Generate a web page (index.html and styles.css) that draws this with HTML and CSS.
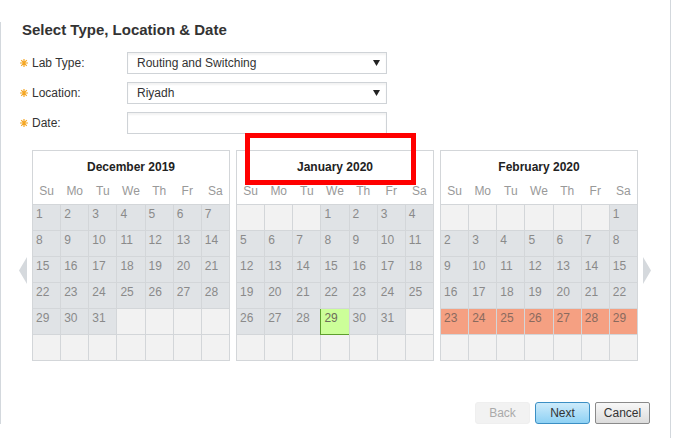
FILE: index.html
```html
<!DOCTYPE html>
<html>
<head>
<meta charset="utf-8">
<link rel="stylesheet" href="styles.css">
</head>
<body>
<div class="wrap">
  <div class="panel">
    <h1 class="title">Select Type, Location &amp; Date</h1>
    <div class="form">
      <div class="row">
        <label class="label"><svg class="req" width="8" height="8" viewBox="0 0 8 8"><path d="M4 0V8M0 4H8M1.2 1.2L6.8 6.8M6.8 1.2L1.2 6.8" stroke="#f5a623" stroke-width="1.2"/></svg>Lab Type:</label>
        <div class="field select"><span>Routing and Switching</span><svg class="caret" width="7" height="6" viewBox="0 0 7 6"><path d="M0 0H7L3.5 6Z" fill="#222"/></svg></div>
      </div>
      <div class="row">
        <label class="label"><svg class="req" width="8" height="8" viewBox="0 0 8 8"><path d="M4 0V8M0 4H8M1.2 1.2L6.8 6.8M6.8 1.2L1.2 6.8" stroke="#f5a623" stroke-width="1.2"/></svg>Location:</label>
        <div class="field select"><span>Riyadh</span><svg class="caret" width="7" height="6" viewBox="0 0 7 6"><path d="M0 0H7L3.5 6Z" fill="#222"/></svg></div>
      </div>
      <div class="row">
        <label class="label"><svg class="req" width="8" height="8" viewBox="0 0 8 8"><path d="M4 0V8M0 4H8M1.2 1.2L6.8 6.8M6.8 1.2L1.2 6.8" stroke="#f5a623" stroke-width="1.2"/></svg>Date:</label>
        <div class="field"></div>
      </div>
    </div>

    <div class="cals">
      <svg class="arrow" width="8" height="27" viewBox="0 0 8 27"><path d="M8 0V27L0 13.5Z" fill="#d5d9dd"/></svg>

      <div class="cal">
        <div class="cal-head">
          <div class="month">December 2019</div>
          <div class="dow"><span>Su</span><span>Mo</span><span>Tu</span><span>We</span><span>Th</span><span>Fr</span><span>Sa</span></div>
        </div>
        <div class="grid">
          <div class="d">1</div><div class="d">2</div><div class="d">3</div><div class="d">4</div><div class="d">5</div><div class="d">6</div><div class="d">7</div>
          <div class="d">8</div><div class="d">9</div><div class="d">10</div><div class="d">11</div><div class="d">12</div><div class="d">13</div><div class="d">14</div>
          <div class="d">15</div><div class="d">16</div><div class="d">17</div><div class="d">18</div><div class="d">19</div><div class="d">20</div><div class="d">21</div>
          <div class="d">22</div><div class="d">23</div><div class="d">24</div><div class="d">25</div><div class="d">26</div><div class="d">27</div><div class="d">28</div>
          <div class="d">29</div><div class="d">30</div><div class="d">31</div><div class="e"></div><div class="e"></div><div class="e"></div><div class="e"></div>
          <div class="e"></div><div class="e"></div><div class="e"></div><div class="e"></div><div class="e"></div><div class="e"></div><div class="e"></div>
        </div>
      </div>

      <div class="cal">
        <div class="highlight"></div>
        <div class="cal-head">
          <div class="month">January 2020</div>
          <div class="dow"><span>Su</span><span>Mo</span><span>Tu</span><span>We</span><span>Th</span><span>Fr</span><span>Sa</span></div>
        </div>
        <div class="grid">
          <div class="e"></div><div class="e"></div><div class="e"></div><div class="d">1</div><div class="d">2</div><div class="d">3</div><div class="d">4</div>
          <div class="d">5</div><div class="d">6</div><div class="d">7</div><div class="d">8</div><div class="d">9</div><div class="d">10</div><div class="d">11</div>
          <div class="d">12</div><div class="d">13</div><div class="d">14</div><div class="d">15</div><div class="d">16</div><div class="d">17</div><div class="d">18</div>
          <div class="d">19</div><div class="d">20</div><div class="d">21</div><div class="d">22</div><div class="d">23</div><div class="d">24</div><div class="d">25</div>
          <div class="d">26</div><div class="d">27</div><div class="d">28</div><div class="d today">29</div><div class="d">30</div><div class="d">31</div><div class="e"></div>
          <div class="e"></div><div class="e"></div><div class="e"></div><div class="e"></div><div class="e"></div><div class="e"></div><div class="e"></div>
        </div>
      </div>

      <div class="cal">
        <div class="cal-head">
          <div class="month">February 2020</div>
          <div class="dow"><span>Su</span><span>Mo</span><span>Tu</span><span>We</span><span>Th</span><span>Fr</span><span>Sa</span></div>
        </div>
        <div class="grid">
          <div class="e"></div><div class="e"></div><div class="e"></div><div class="e"></div><div class="e"></div><div class="e"></div><div class="d">1</div>
          <div class="d">2</div><div class="d">3</div><div class="d">4</div><div class="d">5</div><div class="d">6</div><div class="d">7</div><div class="d">8</div>
          <div class="d">9</div><div class="d">10</div><div class="d">11</div><div class="d">12</div><div class="d">13</div><div class="d">14</div><div class="d">15</div>
          <div class="d">16</div><div class="d">17</div><div class="d">18</div><div class="d">19</div><div class="d">20</div><div class="d">21</div><div class="d">22</div>
          <div class="d busy">23</div><div class="d busy">24</div><div class="d busy">25</div><div class="d busy">26</div><div class="d busy">27</div><div class="d busy">28</div><div class="d busy">29</div>
          <div class="e"></div><div class="e"></div><div class="e"></div><div class="e"></div><div class="e"></div><div class="e"></div><div class="e"></div>
        </div>
      </div>

      <svg class="arrow" width="8" height="27" viewBox="0 0 8 27"><path d="M0 0V27L8 13.5Z" fill="#d5d9dd"/></svg>
    </div>

    <div class="actions">
      <button class="btn back">Back</button>
      <button class="btn next">Next</button>
      <button class="btn cancel">Cancel</button>
    </div>
  </div>
</div>
</body>
</html>
```

FILE: styles.css
```css
html, body {
  margin: 0;
  padding: 0;
  background: #fff;
  overflow: hidden;
}
body {
  font-family: "Liberation Sans", Arial, sans-serif;
  color: #333;
}
.wrap {
  box-sizing: border-box;
  width: 671px;
  height: 438px;
  padding-top: 22px;
  border-right: 1px solid #d3d8dd;
}
.panel {
  height: 402px;
  border-left: 1px solid #d3d8dd;
  display: flex;
  flex-direction: column;
}
.title {
  margin: 0;
  padding-left: 21px;
  font-size: 15px;
  line-height: 16px;
  font-weight: bold;
  color: #333;
}
.form {
  margin-top: 14px;
  padding-left: 18px;
  display: flex;
  flex-direction: column;
  gap: 8px;
}
.row {
  display: flex;
  align-items: center;
  height: 22px;
}
.label {
  width: 108px;
  font-size: 12px;
  color: #333;
  display: flex;
  align-items: center;
}
.req {
  margin-right: 4px;
  margin-left: 1px;
}
.field {
  box-sizing: border-box;
  width: 260px;
  height: 22px;
  border: 1px solid #cfd3d7;
  background: #fff;
  box-shadow: inset 0 2px 2px rgba(0,0,0,0.05);
  display: flex;
  align-items: center;
  justify-content: space-between;
  padding: 0 6px 0 9px;
  font-size: 12px;
  color: #333;
}
.cals {
  margin-top: 16px;
  padding-left: 18px;
  display: flex;
  align-items: flex-start;
  gap: 5px;
}
.arrow {
  margin-top: 107px;
}
.cal {
  position: relative;
  width: 198px;
  box-sizing: border-box;
  border: 1px solid #d3d6d9;
  background: #fff;
}
.cals .cal + .cal {
  margin-left: 1px;
}
.cal-head {
  height: 53px;
  box-sizing: border-box;
  padding-top: 9px;
}
.month {
  text-align: center;
  font-size: 12px;
  line-height: 14px;
  font-weight: bold;
  color: #222;
}
.dow {
  margin-top: 10px;
  display: grid;
  grid-template-columns: repeat(7, 1fr);
  column-gap: 1px;
  font-size: 12px;
  line-height: 14px;
  color: #999;
  text-align: center;
}
.grid {
  display: grid;
  grid-template-columns: repeat(7, 1fr);
  grid-auto-rows: 25px;
  gap: 1px;
  background: #d3d6d9;
  border-top: 1px solid #d3d6d9;
}
.d, .e {
  background: #e0e3e6;
  font-size: 12px;
  line-height: 14px;
  color: #8a8a8a;
  padding: 2px 3px;
}
.e {
  background: #f2f2f2;
}
.today {
  background: #ccff99;
  box-shadow: -1px 0 0 #5e9e2e, 0 1px 0 #5e9e2e, -1px 1px 0 #5e9e2e;
  color: #6d6d5a;
}
.busy {
  background: #f5a082;
  color: #8a6a5e;
}
.highlight {
  position: absolute;
  left: 8px;
  top: -18px;
  width: 171px;
  height: 52px;
  box-sizing: border-box;
  border: 5px solid #ff0000;
  pointer-events: none;
}
.actions {
  margin-top: 41px;
  padding-right: 20px;
  display: flex;
  justify-content: flex-end;
  gap: 5px;
}
.btn {
  width: 55px;
  height: 22px;
  box-sizing: border-box;
  font-family: "Liberation Sans", Arial, sans-serif;
  font-size: 12px;
  color: #333;
  padding: 0;
  border-radius: 3px;
}
.back {
  background: #f2f2f2;
  border: 1px solid #efefef;
  color: #aaa;
}
.next {
  background: linear-gradient(#cdebfb, #8ed1f4);
  border: 1px solid #3b8fc4;
}
.cancel {
  background: linear-gradient(#f8f8f8, #dcdcdc);
  border: 1px solid #8a8a8a;
  border-radius: 2px;
}
```
